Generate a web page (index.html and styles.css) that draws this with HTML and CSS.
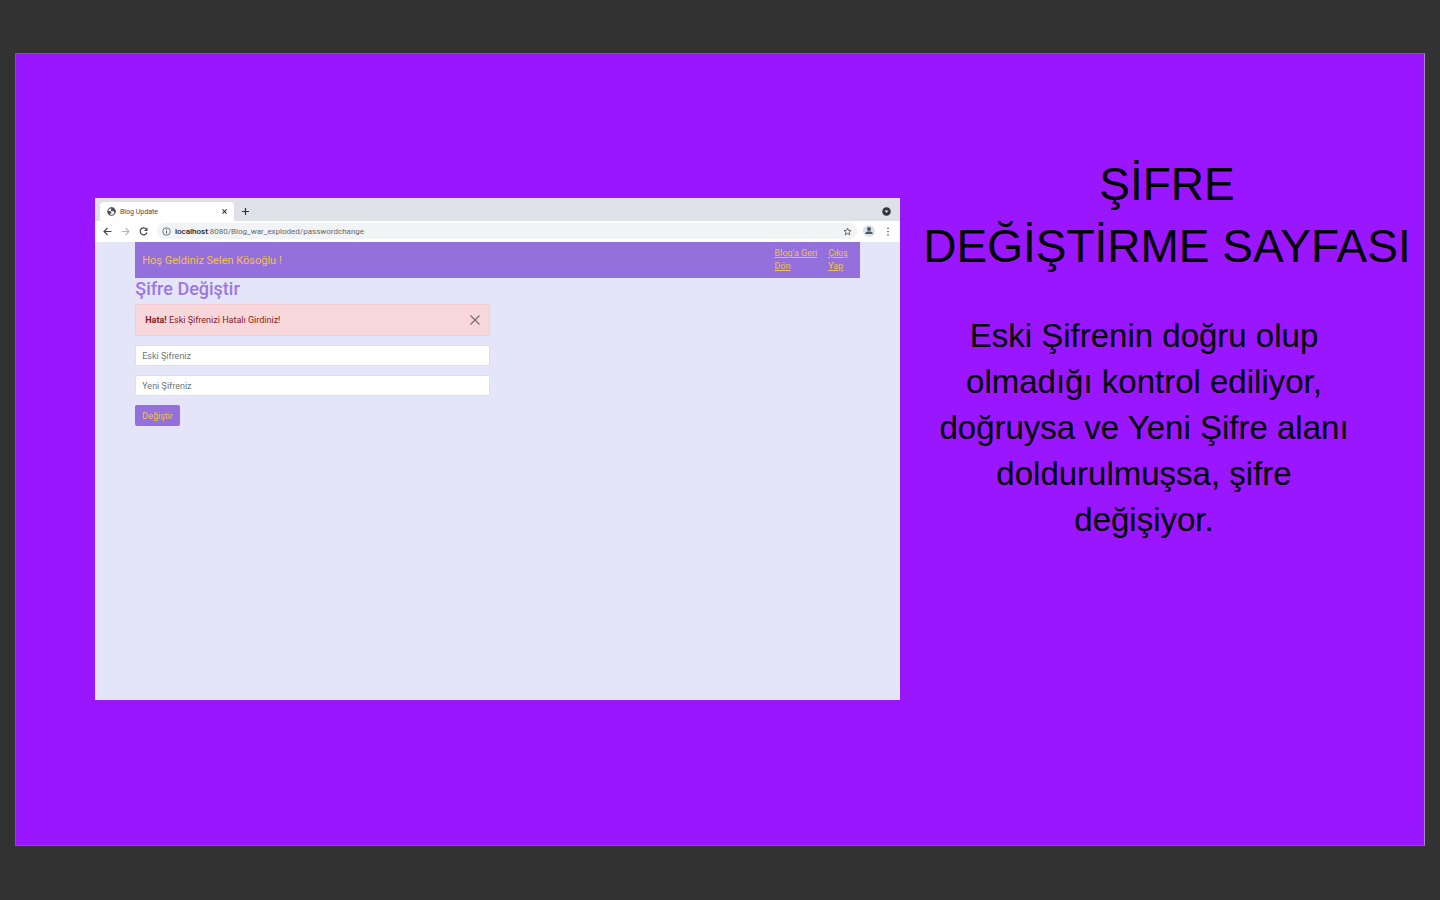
FILE: index.html
```html
<!DOCTYPE html>
<html lang="tr">
<head>
<meta charset="utf-8">
<title>Şifre Değiştirme Sayfası</title>
<link rel="stylesheet" href="styles.css">
</head>
<body>
<main class="slide">
  <section class="browser" aria-label="Blog Update">
    <div class="tabs">
      <div class="tab">
        <svg class="icon" viewBox="0 0 24 24"><circle cx="12" cy="12" r="10" fill="#fff" stroke="#4a4d51" stroke-width="3"/><path fill="#4a4d51" d="M2 10l7 1 3 3-1 3-3 1v4C4 20 2 16 2 10zM9 2h9l4 7v6l-4-1-1-4-5 1-3-3 3-2z"/></svg>
        <span class="tab-title">Blog Update</span>
        <button class="plain" aria-label="Sekmeyi kapat"><svg class="tiny" viewBox="0 0 12 12" stroke="#333" stroke-width="2.6"><path d="M1 1l10 10M11 1L1 11"/></svg></button>
      </div>
      <button class="plain" aria-label="Yeni sekme"><svg class="small" viewBox="0 0 14 14" stroke="#333" stroke-width="2.4"><path d="M7 0v14M0 7h14"/></svg></button>
      <svg class="icon push" viewBox="0 0 18 18"><circle cx="9" cy="9" r="8.500" fill="#333539"/><path d="M5 7h8l-4 5z" fill="#dee1e6"/></svg>
    </div>
    <div class="toolbar">
      <button class="plain" aria-label="Geri"><svg class="icon" viewBox="0 0 18 18" fill="none" stroke="#44474b" stroke-width="2.2"><path d="M17 9H2M9 2L2 9l7 7"/></svg></button>
      <button class="plain" aria-label="İleri"><svg class="icon" viewBox="0 0 18 18" fill="none" stroke="#b5b7ba" stroke-width="2.2"><path d="M1 9h15M9 2l7 7-7 7"/></svg></button>
      <button class="plain" aria-label="Yenile"><svg class="icon" viewBox="0 0 18 18"><path d="M15 4.500A7 7 0 1 0 16 11" fill="none" stroke="#44474b" stroke-width="2.400"/><path d="M17 1v7h-7z" fill="#44474b"/></svg></button>
      <div class="address">
        <svg class="icon" viewBox="0 0 18 18" fill="none" stroke="#55585c"><circle cx="9" cy="9" r="7.500" stroke-width="1.600"/><path d="M9 8v5M9 4.500v2" stroke-width="2"/></svg>
        <span class="url"><b>localhost</b>:8080/Blog_war_exploded/passwordchange</span>
        <svg class="icon push" viewBox="0 0 18 18" fill="none" stroke="#55585c" stroke-width="1.800"><path d="M9 2l2 4.700 5 .5-3.800 3.300 1.200 5L9 12.900 4.600 15.500l1.200-5L2 7.200l5-.5z"/></svg>
      </div>
      <svg class="avatar" viewBox="0 0 24 24"><circle cx="12" cy="12" r="12" fill="#dde2ea"/><circle cx="12" cy="8" r="4" fill="#4b566b"/><path d="M4.500 18c0-4 3-5 7.500-5s7.500 1 7.500 5z" fill="#4b566b"/></svg>
      <svg class="dots" viewBox="0 0 4 18" fill="#606367"><circle cx="2" cy="2.500" r="1.700"/><circle cx="2" cy="9" r="1.700"/><circle cx="2" cy="15.500" r="1.700"/></svg>
    </div>
    <div class="page">
      <nav class="nav">
        <span class="welcome">Hoş Geldiniz Selen Kösoğlu !</span>
        <a href="#">Blog'a Geri<br>Dön</a>
        <a href="#">Çıkış<br>Yap</a>
      </nav>
      <h2 class="title">Şifre Değiştir</h2>
      <form class="form">
        <div class="alert" role="alert">
          <span><b>Hata!</b> Eski Şifrenizi Hatalı Girdiniz!</span>
          <button type="button" class="plain" aria-label="Kapat"><svg class="close" viewBox="0 0 10 10" stroke="#7b6c70" stroke-width="1.200"><path d="M.5.5l9 9M9.500.5l-9 9"/></svg></button>
        </div>
        <input class="field" type="text" placeholder="Eski Şifreniz" aria-label="Eski Şifreniz">
        <input class="field" type="text" placeholder="Yeni Şifreniz" aria-label="Yeni Şifreniz">
        <button type="button" class="submit">Değiştir</button>
      </form>
    </div>
  </section>
  <section class="copy">
    <h1 class="heading">ŞİFRE<br>DEĞİŞTİRME SAYFASI</h1>
    <p class="text">Eski Şifrenin doğru olup olmadığı kontrol ediliyor, doğruysa ve Yeni Şifre alanı doldurulmuşsa, şifre değişiyor.</p>
  </section>
</main>
</body>
</html>
```
FILE: styles.css
```css
* { box-sizing: border-box; }
body {
  margin: 0;
  min-height: 100vh;
  padding: 53px 15px 54px;
  display: flex;
  background: #323232;
  font-family: "Liberation Sans", Arial, sans-serif;
}
.slide {
  flex: 1;
  display: grid;
  grid-template-columns: 805fr 514fr;
  gap: 10px;
  padding-left: 79px;
  background: #9916ff;
  border: 1px solid #8650b5;
  border-right-color: #a58abb;
}
.browser {
  display: flex;
  flex-direction: column;
  margin: 144px 0 145px;
  background: #e5e5fa;
  font-family: Roboto, "Liberation Sans", sans-serif;
  font-size: 9px;
}
.plain {
  display: flex;
  padding: 0;
  border: 0;
  background: none;
}
.icon { width: 9px; height: 9px; flex: none; }
.small { width: 7px; height: 7px; }
.tiny { width: 5px; height: 5px; }
.push { margin-left: auto; }
.tabs {
  display: flex;
  align-items: center;
  gap: 8px;
  height: 23px;
  padding: 4px 9px 0 5px;
  background: #dee1e6;
}
.tab {
  display: flex;
  align-items: center;
  gap: 4px;
  width: 134px;
  height: 19px;
  padding: 0 7px;
  border-radius: 4px 4px 0 0;
  background: #fff;
}
.tab-title { flex: 1; font-size: 7px; color: #45484c; }
.toolbar {
  display: flex;
  align-items: center;
  gap: 9px;
  height: 21px;
  padding: 0 11px 1px 8px;
  background: #fff;
}
.address {
  flex: 1;
  display: flex;
  align-items: center;
  gap: 4px;
  height: 16px;
  margin-right: -3px;
  padding: 0 5px;
  border-radius: 8px;
  background: #f1f3f4;
}
.url { font-size: 8px; color: #66696d; }
.url b { font-weight: 500; color: #222; }
.avatar { width: 12px; height: 12px; }
.dots { width: 2px; height: 9px; margin-left: 3px; }
.page { padding: 0 5%; }
.nav {
  display: flex;
  align-items: center;
  gap: 11px;
  min-height: 36px;
  padding: 0 12px 0 7px;
  background: #9370db;
  color: #f2c14e;
  line-height: 13px;
}
.nav a { color: inherit; }
.welcome { flex: 1; font-size: 11px; }
.title {
  margin: 0;
  font-size: 18px;
  line-height: 22px;
  font-weight: 500;
  color: #9b78e0;
}
.form {
  display: flex;
  flex-direction: column;
  align-items: stretch;
  gap: 9px;
  width: 49%;
  margin-top: 4px;
}
.alert {
  display: flex;
  align-items: center;
  justify-content: space-between;
  height: 32px;
  padding: 0 9px;
  border: 1px solid #f5cbd3;
  border-radius: 2px;
  background: #f8d7da;
  color: #842029;
}
.close { width: 10px; height: 10px; }
.field {
  width: 100%;
  height: 21px;
  padding: 0 6px;
  border: 1px solid #dcdeee;
  border-radius: 2px;
  background: #fff;
  font: inherit;
}
.field::placeholder { color: #6c757d; }
.submit {
  align-self: flex-start;
  height: 21px;
  padding: 0 7px;
  border: 0;
  border-radius: 2px;
  background: #9370db;
  color: #f2c14e;
  font: inherit;
}
.copy { padding-top: 99px; text-align: center; color: #000; }
.heading {
  margin: 0;
  font-size: 46px;
  line-height: 62px;
  font-weight: 400;
  white-space: nowrap;
}
.text {
  margin: 36px 46px 0 0;
  padding: 0 15px;
  font-size: 33px;
  line-height: 46px;
}
```
